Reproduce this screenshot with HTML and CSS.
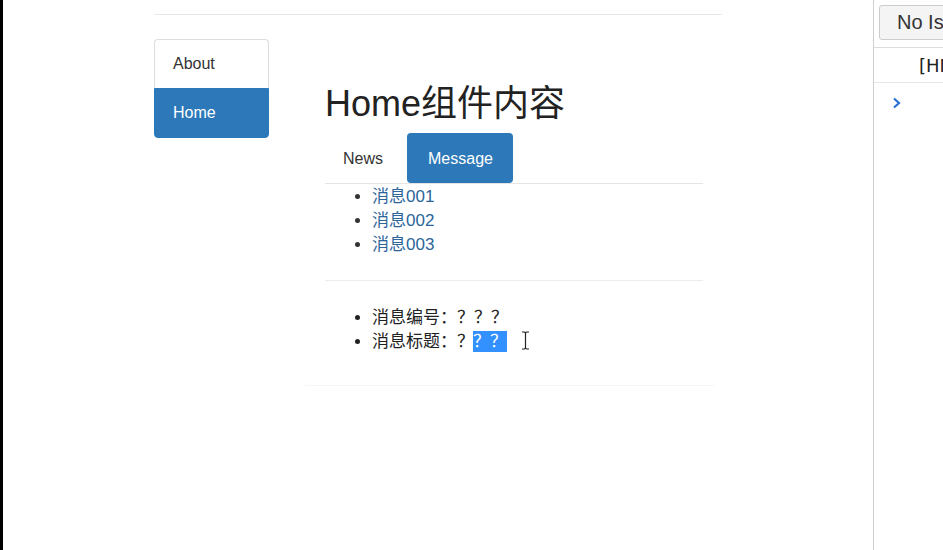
FILE: index.html
```html
<!DOCTYPE html>
<html lang="zh">
<head>
<meta charset="utf-8">
<title>Home</title>
<link rel="stylesheet" href="styles.css">
</head>
<body>
<div class="edge"></div>
<div class="page">
  <div class="topline"></div>
  <div class="row">
    <nav class="side">
      <a class="side-item">About</a>
      <a class="side-item active">Home</a>
    </nav>
    <main class="main">
      <h1 class="title">Home组件内容</h1>
      <ul class="tabs">
        <li><a class="tab">News</a></li>
        <li><a class="tab active">Message</a></li>
      </ul>
      <ul class="msgs">
        <li><a>消息001</a></li>
        <li><a>消息002</a></li>
        <li><a>消息003</a></li>
      </ul>
      <hr class="sep">
      <ul class="detail">
        <li>消息编号：？？？</li>
        <li>消息标题：？<span class="sel">？？</span><svg class="ibeam" width="9" height="19" viewBox="0 0 9 19"><path d="M1 1h2.5M5.5 1H8M4.5 2v15M1 18h2.5M5.5 18H8M3.5 1.2Q4.5 1.4 4.5 2.5M5.5 1.2Q4.5 1.4 4.5 2.5M3.5 17.8Q4.5 17.6 4.5 16.5M5.5 17.8Q4.5 17.6 4.5 16.5" fill="none" stroke="#222" stroke-width="1.2"/></svg></li>
      </ul>
      <hr class="sep faint">
    </main>
  </div>
</div>
<aside class="devtools">
  <div class="dt-bar"><button class="dt-btn">No Issues</button></div>
  <div class="dt-row"><span class="dt-text">[HMR]</span></div>
  <div class="dt-prompt"><svg width="10" height="12" viewBox="0 0 10 12"><path d="M2 1.5l5 4.5-5 4.5" fill="none" stroke="#2a6fd6" stroke-width="2.2"/></svg></div>
</aside>
</body>
</html>
```
FILE: styles.css
```css
html, body {
  margin: 0;
  height: 100%;
}
body {
  display: flex;
  background: #fff;
  font-family: "Liberation Sans", "Noto Sans CJK SC", sans-serif;
  color: #333;
  overflow: hidden;
}
.edge {
  width: 3px;
  background: #000;
  flex: none;
}
.page {
  flex: 1;
  min-width: 0;
}
.topline {
  margin: 14px 0 0 151px;
  width: 568px;
  border-top: 1px solid #e8e8e8;
}
.row {
  display: flex;
  margin: 24px 0 0 151px;
  gap: 56px;
}
.side {
  width: 115px;
  display: flex;
  flex-direction: column;
  flex: none;
  align-self: flex-start;
}
.side-item {
  display: block;
  height: 48px;
  line-height: 48px;
  padding: 0 18px;
  font-size: 16px;
  color: #333;
  border: 1px solid #ddd;
  background: #fff;
}
.side-item:first-child {
  border-radius: 4px 4px 0 0;
  border-bottom: none;
}
.side-item.active {
  background: #2c78b8;
  border-color: #2c78b8;
  color: #fff;
  border-radius: 0 0 4px 4px;
}
.main {
  width: 378px;
}
.title {
  margin: 45px 0 9px;
  font-size: 36px;
  line-height: 40px;
  font-weight: 400;
  color: #222;
}
.tabs {
  list-style: none;
  margin: 0;
  padding: 0;
  display: flex;
  gap: 6px;
  border-bottom: 1px solid #e4e4e4;
}
.tab {
  display: block;
  height: 50px;
  line-height: 51px;
  padding: 0 18px;
  font-size: 16px;
  color: #333;
  border-radius: 4px;
}
.tab.active {
  background: #2c78b8;
  color: #fff;
  padding: 0 20px 0 21px;
}
.msgs, .detail {
  margin: 0;
  padding-left: 47px;
  font-size: 17px;
  line-height: 24px;
}
.msgs {
  padding-top: 1px;
}
.msgs a {
  color: #2c659a;
}
.sep {
  margin: 23px 0 24px;
  border: 0;
  border-top: 1px solid #ececec;
}
.sep.faint {
  margin: 31px -12px 0 -20px;
  border-top-color: #f5f5f5;
}
.detail {
  color: #222;
  padding-top: 1px;
}
.sel {
  background: #3390ff;
  color: #fff;
  display: inline-block;
  line-height: 21px;
  margin-left: -1px;
}
.ibeam {
  vertical-align: -3px;
  margin-left: 14px;
}
.devtools {
  width: 69px;
  flex: none;
  border-left: 1px solid #cfcfcf;
  overflow: hidden;
  background: #fff;
}
.dt-bar {
  height: 42px;
  padding: 5px 0 0 5px;
  border-bottom: 1px solid #ddd;
}
.dt-btn {
  height: 35px;
  width: 120px;
  border: 1px solid #ccc;
  border-radius: 3px;
  background: #f4f4f4;
  font-family: "Liberation Sans", sans-serif;
  font-size: 20px;
  color: #333;
  text-align: left;
  padding: 0 0 0 17px;
}
.dt-row {
  height: 34px;
  line-height: 36px;
  padding-left: 45px;
  border-bottom: 1px solid #e6e6e6;
  font-family: "DejaVu Sans", sans-serif;
  font-size: 18px;
  color: #222;
  white-space: nowrap;
}
.dt-prompt {
  padding: 12px 0 0 18px;
}
```
